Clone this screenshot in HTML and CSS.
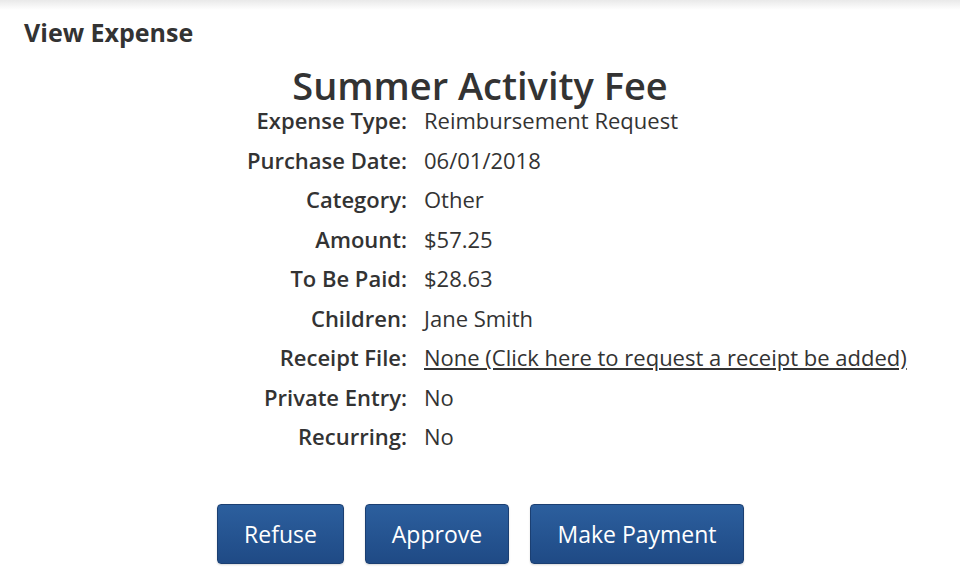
FILE: index.html
```html
<!DOCTYPE html>
<html lang="en">
<head>
    <meta charset="UTF-8">
    <meta name="viewport" content="width=device-width, initial-scale=1.0">
    <title>View Expense</title>
    <link rel="stylesheet" href="styles.css">
</head>

<body>
    <div class="page">
        <h3 class="page-title">View Expense</h3>

        <h1 class="expense-name">Summer Activity Fee</h1>

        <div class="details">
            <div class="label">Expense Type:</div>
            <div class="value">Reimbursement Request</div>

            <div class="label">Purchase Date:</div>
            <div class="value">06/01/2018</div>

            <div class="label">Category:</div>
            <div class="value">Other</div>

            <div class="label">Amount:</div>
            <div class="value">$57.25</div>

            <div class="label">To Be Paid:</div>
            <div class="value">$28.63</div>

            <div class="label">Children:</div>
            <div class="value">Jane Smith</div>

            <div class="label">Receipt File:</div>
            <div class="value"><a href="#">None (Click here to request a receipt be added)</a></div>

            <div class="label">Private Entry:</div>
            <div class="value">No</div>

            <div class="label">Recurring:</div>
            <div class="value">No</div>
        </div>

        <div class="actions">
            <button class="btn btn-refuse">Refuse</button>
            <button class="btn btn-approve">Approve</button>
            <button class="btn btn-pay">Make Payment</button>
        </div>
    </div>
</body>
</html>
```

FILE: styles.css
```css
body {
    margin: 0;
    font-family: "Open Sans", Arial, sans-serif;
    color: #333;
    background: #fff;
}

.page {
    min-height: 577px;
    background: linear-gradient(to bottom, #e9e9e9 0px, #fff 10px);
    padding-top: 16px;
    box-sizing: border-box;
}

.page-title {
    margin: 0 0 0 24px;
    font-size: 25px;
    font-weight: 700;
    line-height: 32px;
}

.expense-name {
    margin: 21px 0 0;
    text-align: center;
    font-size: 38px;
    font-weight: 600;
    line-height: 32px;
}

.details {
    display: grid;
    grid-template-columns: 407px auto;
    column-gap: 17px;
    font-size: 22px;
    line-height: 39.5px;
}

.label {
    text-align: right;
    font-weight: 600;
}

.value a {
    color: #333;
    text-decoration: underline;
}

.actions {
    display: flex;
    justify-content: center;
    gap: 21px;
    margin-top: 47px;
    padding-left: 1px;
}

.btn {
    height: 60px;
    padding: 0;
    font-family: "Open Sans", Arial, sans-serif;
    font-size: 23px;
    color: #fff;
    border: 1px solid #1b3f72;
    border-radius: 4px;
    background: linear-gradient(to bottom, #2c5f9e, #1f4a85);
    box-shadow: 0 1px 2px rgba(0, 0, 0, 0.15);
    cursor: pointer;
}

.btn-refuse { width: 127px; }
.btn-approve { width: 144px; }
.btn-pay { width: 214px; }
```
